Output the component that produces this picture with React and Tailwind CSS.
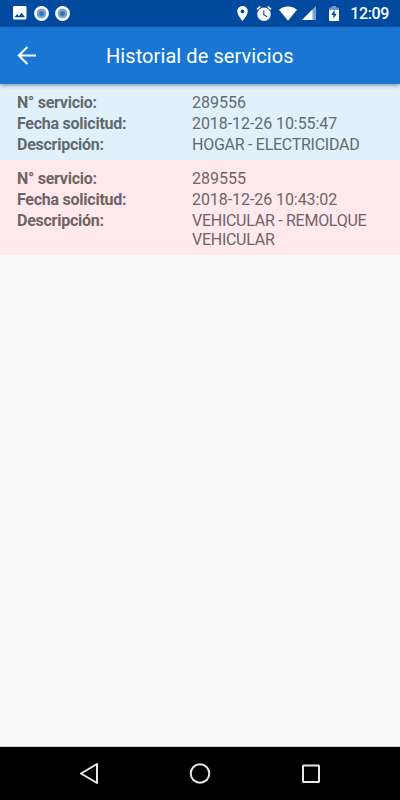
const services = [
  {
    id: '289556',
    date: '2018-12-26 10:55:47',
    description: 'HOGAR - ELECTRICIDAD',
    tone: 'bg-[#e1f1fc] h-[76px] text-[#626a6e]',
  },
  {
    id: '289555',
    date: '2018-12-26 10:43:02',
    description: 'VEHICULAR - REMOLQUE VEHICULAR',
    tone: 'bg-[#ffe9ec] h-[95px] text-[#6e6465]',
  },
];

function NotificationDot() {
  return (
    <svg className="size-[15px]" viewBox="0 0 15 15">
      <circle cx="7.5" cy="7.5" r="7.4" fill="#fff" />
      <circle cx="7.5" cy="7.5" r="4.9" fill="#79a5d6" />
      <circle cx="7.5" cy="7.5" r="2.5" fill="#3e74b5" />
    </svg>
  );
}

function StatusBar() {
  return (
    <div className="flex h-[27px] shrink-0 items-center justify-between border-b border-[#0c58b0] bg-[#004a9f] pr-[11px] pl-[13px]">
      <div className="flex items-center gap-[6.500px]">
        <svg className="mr-[0.5px] size-[13.5px]" viewBox="3 3 18 18" fill="#fff">
          <path d="M21 19V5c0-1.100-.9-2-2-2H5c-1.100 0-2 .9-2 2v14c0 1.100.9 2 2 2h14c1.100 0 2-.9 2-2zM8.500 13.500l2.500 3.010L14.500 12l4.500 6H5l3.500-4.500z" />
        </svg>
        <NotificationDot />
        <NotificationDot />
      </div>
      <div className="flex items-center">
        <svg className="mr-[8px] h-[15px] w-[11px]" viewBox="5 2 14 20" fill="#fff">
          <path d="M12 2C8.130 2 5 5.130 5 9c0 5.250 7 13 7 13s7-7.750 7-13c0-3.870-3.130-7-7-7zm0 9.500a2.500 2.500 0 1 1 0-5 2.500 2.500 0 0 1 0 5z" />
        </svg>
        <svg className="mr-[7px] h-[15px] w-4" viewBox="2 2 20 20" fill="#fff">
          <path d="M22 5.720l-4.600-3.860-1.290 1.530 4.600 3.860L22 5.720zM7.880 3.390L6.600 1.860 2 5.710l1.290 1.530 4.590-3.850zM12 4a9 9 0 1 0 0 18 9 9 0 0 0 0-18zM11 8h1.500v5.250l4 2.370-.75 1.230L11 14V8z" />
        </svg>
        <svg className="mr-[5px] h-[15px] w-[18px]" viewBox="0 0 18 15" fill="#fff">
          <path d="M9 14.700 0 3.800C2.400 1.700 5.500.5 9 .5s6.600 1.200 9 3.300z" />
        </svg>
        <svg className="mr-[13px] h-[14px] w-[14px]" viewBox="0 0 14 14">
          <path d="M0 14 14 0v14z" fill="#7ba3cf" />
          <path d="M0 14 10.500 3.500V14z" fill="#fff" />
        </svg>
        <svg className="mr-[11px] h-[15px] w-[10px]" viewBox="0 0 10 15">
          <path d="M3 0h4v1.500h2.200a.8.8 0 0 1 .8.800V5H0V2.300a.8.8 0 0 1 .8-.8H3z" fill="#6d99ca" />
          <path d="M0 4h10v10.200a.8.8 0 0 1-.8.800H.8a.8.8 0 0 1-.8-.8z" fill="#fff" />
          <path d="M5.600 3.800 2.200 9h2.200v3.700L7.800 7.700H5.600z" fill="#004a9f" />
        </svg>
        <span className="pt-[2px] text-[16px] leading-none font-medium tracking-[-0.35px] text-white">12:09</span>
      </div>
    </div>
  );
}

function ServiceRow({ service }) {
  return (
    <section className={`flex shrink-0 flex-col gap-[2px] pt-[9px] pr-4 pl-[17px] text-[16px] leading-[19px] ${service.tone}`}>
      <div className="flex">
        <b className="w-[175px] shrink-0 tracking-[-0.25px]">N° servicio:</b>
        <span>{service.id}</span>
      </div>
      <div className="flex">
        <b className="w-[175px] shrink-0 tracking-[-0.25px]">Fecha solicitud:</b>
        <span className="tracking-[-0.07px]">{service.date}</span>
      </div>
      <div className="flex">
        <b className="w-[175px] shrink-0 tracking-[-0.25px]">Descripción:</b>
        <span className="tracking-[-0.27px]">{service.description}</span>
      </div>
    </section>
  );
}

export default function App() {
  return (
    <div className="flex h-[800px] w-[400px] flex-col overflow-hidden bg-[#fafafa] font-['Roboto',sans-serif]">
      <StatusBar />
      <header className="relative flex h-[57px] shrink-0 items-center bg-[#1976d4] shadow-[0_1px_4px_rgba(0,0,0,0.45)]">
        <svg className="ml-[17px] size-[19px]" viewBox="4 4 16 16" fill="#fff">
          <path d="M20 11.150H7.630l5.690-5.740L12.200 4.200 4.300 12l7.900 7.800 1.120-1.210L7.630 12.850H20z" />
        </svg>
        <h1 className="ml-[70px] pt-[1px] text-[20px] leading-6 tracking-[0.08px] text-white">Historial de servicios</h1>
      </header>
      <main className="flex flex-1 flex-col">
        {services.map((service) => (
          <ServiceRow key={service.id} service={service} />
        ))}
      </main>
      <nav className="flex h-[54px] shrink-0 items-center justify-between border-t border-[#cfd0d2] bg-black pr-[79px] pl-[79px]">
        <svg className="h-[22px] w-5" viewBox="0 0 20 22" fill="none" stroke="#e8e8e8" strokeWidth="2" strokeLinejoin="round">
          <path d="M18 1v19L2 10.500z" />
        </svg>
        <svg className="size-[22px]" viewBox="0 0 22 22" fill="none" stroke="#e8e8e8" strokeWidth="2">
          <circle cx="11" cy="10.500" r="9.300" />
        </svg>
        <svg className="size-5" viewBox="0 0 20 20" fill="none" stroke="#e8e8e8" strokeWidth="2">
          <rect x="2" y="1.500" width="16" height="16.500" rx=".5" />
        </svg>
      </nav>
    </div>
  );
}
